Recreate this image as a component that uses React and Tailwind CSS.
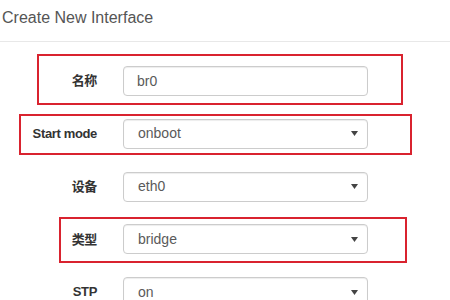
import React from "react";

const rows = [
  { label: "名称", value: "br0", select: false },
  { label: "Start mode", value: "onboot", select: true },
  { label: "设备", value: "eth0", select: true },
  { label: "类型", value: "bridge", select: true },
  { label: "STP", value: "on", select: true },
];

// red annotation frames drawn on top of the form
const marks = [
  "left-[37px] top-[54px] w-[366px] h-[51px]",
  "left-[19px] top-[114px] w-[393px] h-[41px]",
  "left-[59px] top-[217px] w-[348px] h-[46px]",
];

const Field = ({ value, select }) => (
  <div className="ml-[26px] w-[245px] h-[30px] flex items-center justify-between rounded-[4px] border border-[#cccccc] bg-white shadow-[inset_0_1px_1px_rgba(0,0,0,0.075)] pl-[13px] pr-[8px] text-[14px] text-[#5a5a5a]">
    <span className={select ? "pl-[1px]" : ""}>{value}</span>
    {select && (
      <svg width="7" height="5" viewBox="0 0 7 5" className="mr-[1px]">
        <path d="M0 0 L7 0 L3.5 5 Z" fill="#444444" />
      </svg>
    )}
  </div>
);

export default function App() {
  return (
    <div
      className="relative w-[450px] h-[300px] overflow-hidden bg-white"
      style={{ fontFamily: '"Liberation Sans", Arial, "Noto Sans CJK SC", sans-serif' }}
    >
      <div className="h-[42px] border-b border-[#e8e8e8] pl-[2px] pt-[6px]">
        <h1 className="text-[16px] leading-6 text-[#555555]">Create New Interface</h1>
      </div>

      <div className="mt-[24px] flex flex-col gap-[22.75px]">
        {rows.map((row) => (
          <div key={row.label} className="flex items-center">
            <label className="w-[97px] text-right text-[13px] font-bold tracking-[-0.35px] text-[#333333]">
              {row.label}
            </label>
            <Field value={row.value} select={row.select} />
          </div>
        ))}
      </div>

      {marks.map((m) => (
        <div key={m} className={`absolute border-2 border-[#d9232f] ${m}`} />
      ))}
    </div>
  );
}
